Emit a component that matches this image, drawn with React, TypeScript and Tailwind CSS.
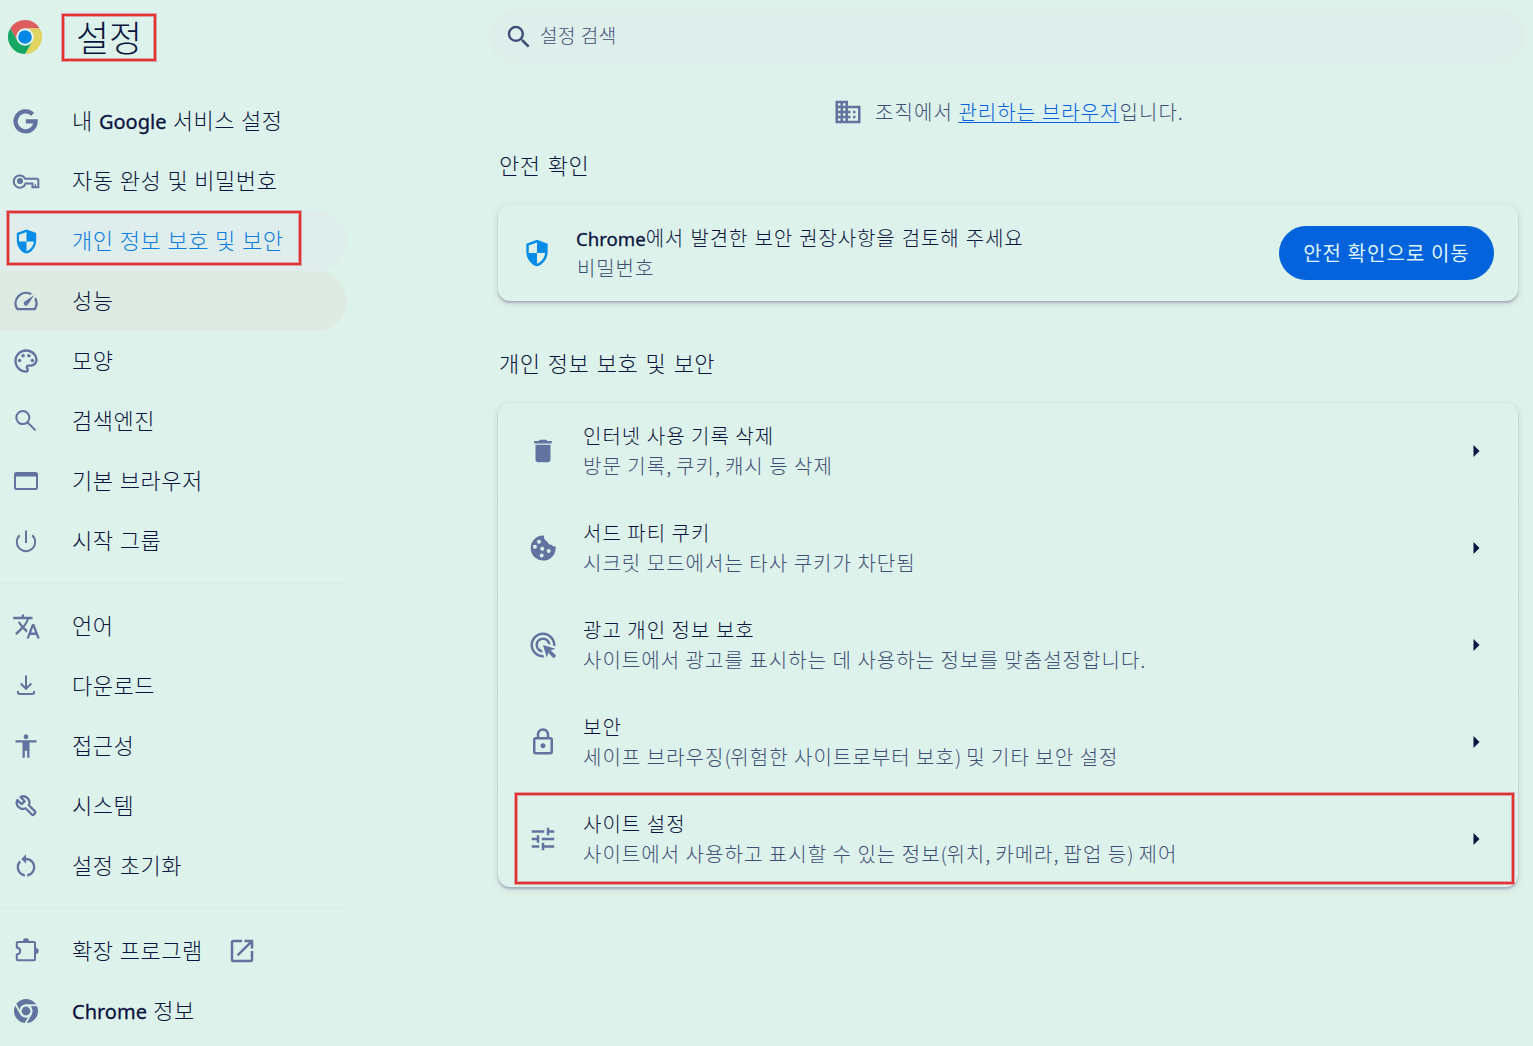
import React from "react";
import {
  MdAccessibility,
  MdAdsClick,
  MdDelete,
  MdDomain,
  MdOpenInNew,
  MdOutlineLock,
  MdOutlinePalette,
  MdOutlineSpeed,
  MdRestartAlt,
  MdSearch,
  MdTranslate,
  MdTune,
} from "react-icons/md";

// Icons
const ShieldIcon = ({ size }: { size: number }) => (
  <svg width={size} height={size} viewBox="0 0 24 24" fill="currentColor">
    <path
      fillRule="evenodd"
      d="M12 2 4 5v6.09c0 5.05 3.41 9.76 8 10.91 4.59-1.15 8-5.86 8-10.91V5l-8-3zM12 4.1 5.8 6.4V12H12zM12 12h6.1c-.4 3.7-2.9 7-6.1 8z"
    />
  </svg>
);

const LineIcon = ({ children }: { children: React.ReactNode }) => (
  <svg
    width="28"
    height="28"
    viewBox="0 0 28 28"
    fill="none"
    stroke="currentColor"
    strokeWidth="2"
  >
    {children}
  </svg>
);

const GoogleIcon = () => (
  <LineIcon>
    <path
      strokeWidth="4.300"
      d="M20.600 7.200A10 10 0 1 0 23.600 14.300H13.800"
    />
  </LineIcon>
);

const KeyIcon = () => (
  <LineIcon>
    <path d="M13.200 11.800H25q1.300 0 1.300 1.300V20.300h-5.800V16.400H13.600A6.100 6.100 0 1 1 13.200 11.800z" />
    <path d="M23.300 17v3.500" strokeWidth="1.200" />
    <circle cx="8" cy="14" r="3" fill="currentColor" stroke="none" />
  </LineIcon>
);

const SearchIcon = () => (
  <LineIcon>
    <circle cx="10.8" cy="10.6" r="6.5" />
    <path d="M15.4 15.3 23.5 23.4" />
  </LineIcon>
);

const WindowIcon = () => (
  <LineIcon>
    <rect x="3" y="6" width="22" height="16" rx="1.5" />
    <path d="M3 8h22" strokeWidth="3" />
  </LineIcon>
);

const PowerIcon = () => (
  <LineIcon>
    <path d="M14 3.500V16M7.800 8.200A9.200 9.200 0 1 0 20.200 8.200" />
  </LineIcon>
);

const DownloadIcon = () => (
  <LineIcon>
    <path d="M14 3.500V16.500M8.700 11.500 14 16.800 19.300 11.500M6 19v1.500Q6 22 7.500 22h13q1.500 0 1.500-1.500V19" />
  </LineIcon>
);

const WrenchIcon = () => (
  <LineIcon>
    <path
      strokeLinejoin="round"
      strokeWidth="2.300"
      d="M5.400 8 9.600 12.200 12.700 9.200 8.500 5A6.200 6.200 0 0 1 16.800 13.200L23 19.400q.9.9 0 1.800l-1.300 1.300q-.9.900-1.800 0L13.600 16.300A6.200 6.200 0 0 1 5.400 8z"
    />
  </LineIcon>
);

const PuzzleIcon = () => (
  <LineIcon>
    <path d="M5.700 4.900H22q1 0 1 1V22.200q0 1-1 1H5.700q-.9 0-.9-.9V17.600q3.400-.6 3.400-3.600T4.800 10.400V5.800q0-.9.9-.9z" />
    <path
      fill="currentColor"
      stroke="none"
      d="M11 4.500a3 3.200 0 0 1 6 0zM23.500 11a3.200 3 0 0 1 0 6z"
    />
  </LineIcon>
);

const CookieIcon = () => (
  <svg width="30" height="30" viewBox="-2 -2 30 30" fill="currentColor">
    <path
      fillRule="evenodd"
      d="M13 .6q.5 0 1 .05Q13.600 5 17 6.300 18.500 10 21.500 9.700 23 11.800 25.600 11.500A12.500 12.500 0 1 1 13 .6zM9 4.700a2 2 0 1 0 0 4 2 2 0 0 0 0-4zM4.900 9.700a2 2 0 1 0 0 4 2 2 0 0 0 0-4zM12.300 11.700a2 2 0 1 0 0 4 2 2 0 0 0 0-4zM18.700 14a2 2 0 1 0 0 4 2 2 0 0 0 0-4zM11.700 18.400a2 2 0 1 0 0 4 2 2 0 0 0 0-4z"
    />
  </svg>
);

const RED_ARC =
  "M24 12h20.780A23.994 23.994 0 0 0 3.215 12.002L13.608 30A11.985 11.985 0 0 1 24 12Z";
const YELLOW_ARC =
  "M34.391 30.003 24.001 48A23.994 23.994 0 0 0 44.780 12.003H24A11.985 11.985 0 0 1 34.391 30.003Z";
const GREEN_ARC =
  "M13.609 30.003 3.218 12.006A23.994 23.994 0 0 0 24.002 48L34.393 30.003A11.985 11.985 0 0 1 13.609 30.003Z";

const ChromeLogo = () => (
  <svg width="34" height="34" viewBox="0 0 48 48">
    <path d={RED_ARC} fill="#dc5c60" />
    <path d={YELLOW_ARC} fill="#e0d460" />
    <path d={GREEN_ARC} fill="#17a765" />
    <circle cx="24" cy="24" r="12" fill="#e3f5f0" />
    <circle cx="24" cy="24" r="9.600" fill="#0587e6" />
  </svg>
);

const ChromeIcon = () => (
  <svg width="24" height="24" viewBox="0 0 48 48">
    <circle cx="24" cy="24" r="24" fill="currentColor" />
    <g stroke="#ddf2ea" strokeWidth="3.600">
      <path d="M24 12.500h24" />
      <path d="M24 12.500h24" transform="rotate(120 24 24)" />
      <path d="M24 12.500h24" transform="rotate(240 24 24)" />
    </g>
    <circle cx="24" cy="24" r="13.300" fill="#ddf2ea" />
    <circle cx="24" cy="24" r="8.800" fill="currentColor" />
  </svg>
);

// Red frame drawn over the area it is placed in
const Marker = ({ className }: { className: string }) => (
  <div
    className={`pointer-events-none absolute border-2 border-[#e6322d] shadow-[0_0_0_1px_rgba(214,110,130,0.6),inset_0_0_0_1px_rgba(214,110,130,0.6)] ${className}`}
  />
);

type MenuItem = {
  label: React.ReactNode;
  icon: React.ReactNode;
  state?: "selected" | "hover";
  external?: boolean;
};

const Latin = ({
  children,
  className = "text-[20px]",
}: {
  children: React.ReactNode;
  className?: string;
}) => (
  <span
    className={`font-['Noto_Sans','Open_Sans',sans-serif] font-normal leading-none tracking-[0] [-webkit-text-stroke:0.3px] ${className}`}
  >
    {children}
  </span>
);

const MENU: MenuItem[][] = [
  [
    {
      label: (
        <>
          내 <Latin>Google</Latin> 서비스 설정
        </>
      ),
      icon: <GoogleIcon />,
    },
    { label: "자동 완성 및 비밀번호", icon: <KeyIcon /> },
    {
      label: "개인 정보 보호 및 보안",
      icon: <ShieldIcon size={29} />,
      state: "selected",
    },
    { label: "성능", icon: <MdOutlineSpeed size={28} />, state: "hover" },
    { label: "모양", icon: <MdOutlinePalette size={28} /> },
    { label: "검색엔진", icon: <SearchIcon /> },
    { label: "기본 브라우저", icon: <WindowIcon /> },
    { label: "시작 그룹", icon: <PowerIcon /> },
  ],
  [
    { label: "언어", icon: <MdTranslate size={29} /> },
    { label: "다운로드", icon: <DownloadIcon /> },
    { label: "접근성", icon: <MdAccessibility size={28} /> },
    { label: "시스템", icon: <WrenchIcon /> },
    { label: "설정 초기화", icon: <MdRestartAlt size={28} /> },
  ],
  [
    { label: "확장 프로그램", icon: <PuzzleIcon />, external: true },
    {
      label: (
        <>
          <Latin>Chrome</Latin> 정보
        </>
      ),
      icon: <ChromeIcon />,
    },
  ],
];

const PRIVACY_ROWS = [
  {
    title: "인터넷 사용 기록 삭제",
    desc: "방문 기록, 쿠키, 캐시 등 삭제",
    icon: <MdDelete size={30} />,
  },
  {
    title: "서드 파티 쿠키",
    desc: "시크릿 모드에서는 타사 쿠키가 차단됨",
    icon: <CookieIcon />,
  },
  {
    title: "광고 개인 정보 보호",
    desc: "사이트에서 광고를 표시하는 데 사용하는 정보를 맞춤설정합니다.",
    icon: <MdAdsClick size={30} />,
  },
  {
    title: "보안",
    desc: "세이프 브라우징(위험한 사이트로부터 보호) 및 기타 보안 설정",
    icon: <MdOutlineLock size={30} />,
  },
  {
    title: "사이트 설정",
    desc: "사이트에서 사용하고 표시할 수 있는 정보(위치, 카메라, 팝업 등) 제어",
    icon: <MdTune size={30} />,
    marked: true,
  },
];

const STATE_CLASS = {
  selected: "bg-[#dfeeec] text-[#0b7de0]",
  hover: "bg-[#deebe3] text-[#0a1440]",
};

// Punctuation is set tighter than the Hangul around it
const tighten = (text: string) =>
  text.split(/([,()])/).map((part, i) =>
    i % 2 ? (
      <span key={i} className="tracking-[-0.5px]">
        {part}
      </span>
    ) : (
      part
    )
  );

const Sidebar = () => (
  <aside className="w-[350px] shrink-0">
    <div className="flex h-[91px] items-start pl-2 pt-[14px]">
      <div className="flex h-[46px] items-center">
        <ChromeLogo />
      </div>
      <div className="relative ml-5 h-[47px] w-[94px]">
        <h1 className="whitespace-nowrap pl-[14px] text-[36px] leading-[44px] tracking-[0]">
          설정
        </h1>
        <Marker className="inset-0" />
      </div>
    </div>
    {MENU.map((group, i) => (
      <React.Fragment key={i}>
        {i > 0 && <div className="my-3 h-px bg-[#dbebe5]" />}
        {group.map((item, j) => (
          <div
            key={j}
            className={`relative flex h-[60px] w-[347px] items-center rounded-r-full ${
              item.state ? STATE_CLASS[item.state] : ""
            }`}
          >
            <div
              className={`flex w-[52px] shrink-0 items-center justify-center ${
                item.state === "selected" ? "text-[#058be8]" : "text-[#62739f]"
              }`}
            >
              {item.icon}
            </div>
            <div className="ml-[20px] whitespace-nowrap pb-[4px] text-[22px] leading-[30px] tracking-[0.52px] [word-spacing:0.8px]">
              {item.label}
            </div>
            {item.external && (
              <MdOpenInNew size={30} className="ml-[24px] text-[#62739f]" />
            )}
            {item.state === "selected" && (
              <Marker className="left-[7px] top-0 h-[54px] w-[294px]" />
            )}
          </div>
        ))}
      </React.Fragment>
    ))}
  </aside>
);

const CARD =
  "rounded-xl shadow-[0_2px_2px_rgba(70,80,130,0.32),0_2px_6px_1px_rgba(120,60,80,0.12)]";

export default function App() {
  return (
    <div className="flex h-[1046px] w-[1533px] overflow-hidden bg-[#ddf2ea] font-['Noto_Sans_CJK_KR',sans-serif] font-light text-[#0a1440]">
      <Sidebar />

      <main className="ml-[139px] flex-1 pt-[10px]">
        <div className="flex h-[54px] w-[1037px] items-center rounded-full bg-[#deeeea] pl-[15px] text-[#3f4f78]">
          <MdSearch size={30} />
          <span className="ml-[6px] pb-[5px] text-[19px] leading-[28px] tracking-[0.5px]">
            설정 검색
          </span>
        </div>

        <div className="ml-[9px] w-[1020px]">
          <div className="mt-[33px] flex h-[30px] items-center justify-center pl-px text-[20px] leading-[30px] tracking-[1.05px] text-[#3f4f78]">
            <MdDomain size={30} className="mr-[12px] text-[#62739f]" />
            <span>
              조직에서{" "}
              <a className="text-[#0560df] underline decoration-1 underline-offset-[2px]">
                관리하는 브라우저
              </a>
              입니다.
            </span>
          </div>

          <h2 className="mt-[22px] h-[30px] pl-px text-[22px] leading-[30px] tracking-[0.5px] [word-spacing:2px]">
            안전 확인
          </h2>
          <div className={`mt-[26px] flex h-[96px] items-center pl-[23px] pr-6 ${CARD}`}>
            <div className="text-[#058be8]">
              <ShieldIcon size={32} />
            </div>
            <div className="ml-[23px] flex-1 pb-px text-[20px] leading-[30px]">
              <div className="tracking-[0.8px] [word-spacing:1.2px]">
                <Latin className="text-[18.6px]">Chrome</Latin>에서 발견한 보안
                권장사항을 검토해 주세요
              </div>
              <div className="pl-px tracking-[0.9px] text-[#3f4f78]">비밀번호</div>
            </div>
            <button className="h-[54px] w-[215px] rounded-full bg-[#0263dd] pb-px text-[20px] font-normal tracking-[1.05px] text-[#ddf2fa]">
              안전 확인으로 이동
            </button>
          </div>

          <h2 className="mt-[46px] h-[30px] pl-px text-[22px] leading-[30px] tracking-[0.5px] [word-spacing:2px]">
            개인 정보 보호 및 보안
          </h2>
          <div className={`mt-[26px] ${CARD}`}>
            {PRIVACY_ROWS.map((row) => (
              <div
                key={row.title}
                className="relative flex h-[97px] items-center border-b border-[#dceee7] pl-[30px] pr-[38px] last:h-[96px] last:border-transparent"
              >
                <div className="text-[#62739f]">{row.icon}</div>
                <div className="ml-[25px] flex-1 text-[20px] leading-[30px] tracking-[1.03px]">
                  <div>{row.title}</div>
                  <div className="text-[#3f4f78]">{tighten(row.desc)}</div>
                </div>
                <svg width="7" height="12" viewBox="0 0 7 12">
                  <path d="M0.500 0 6.500 6 0.500 12z" fill="#0a1440" />
                </svg>
                {row.marked && (
                  <Marker className="left-[17px] top-[2px] h-[91px] w-[999px]" />
                )}
              </div>
            ))}
          </div>
        </div>
      </main>
    </div>
  );
}
